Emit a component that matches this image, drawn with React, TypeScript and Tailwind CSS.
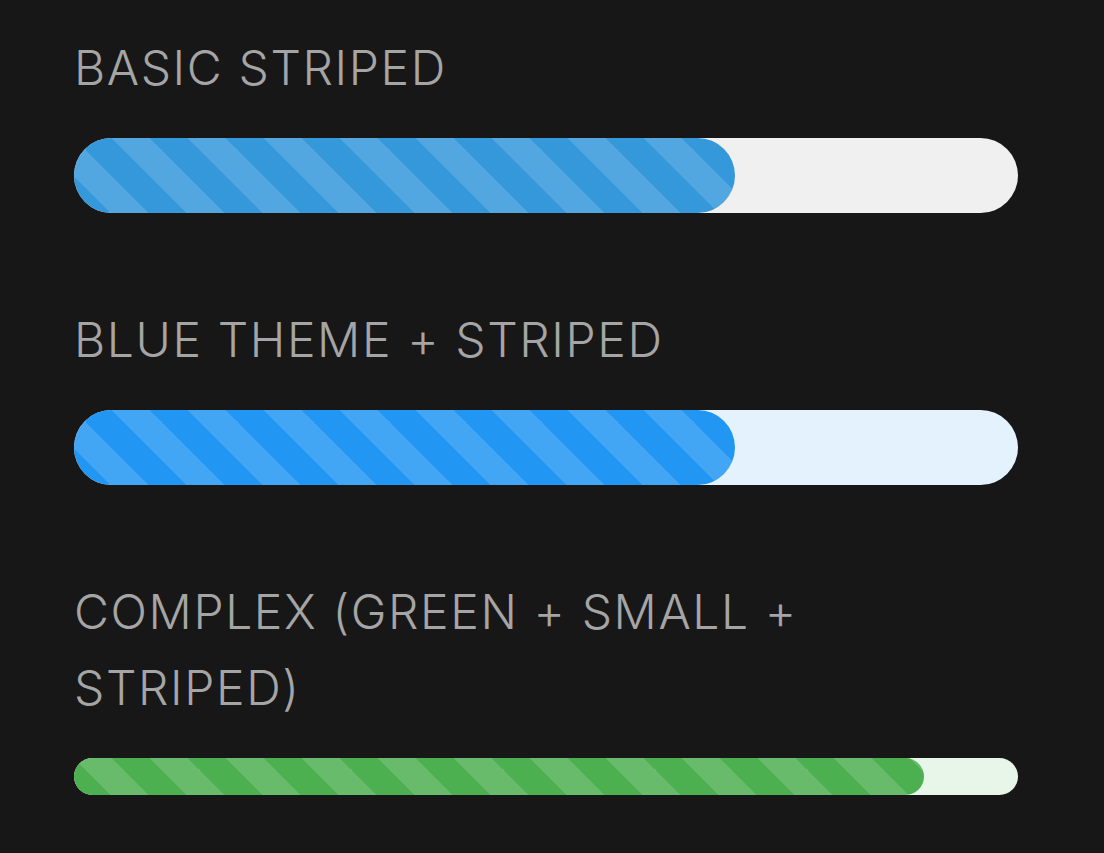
import React from "react";

const labelCls =
  "text-[48px] leading-[1.6] font-light tracking-[1.6px] uppercase text-[#a5a5a5] mb-[31px] font-['Inter','Roboto',sans-serif]";

export default function App() {
  return (
    <div className="min-h-screen bg-[#171717] pl-[74px] pt-[30px]">
      <div className="w-[944px] flex flex-col gap-[89px]">
        <section>
          <div className={labelCls}>Basic Striped</div>
          <div className="h-[75px] rounded-full bg-[#f0f0f0]">
            <div className="h-full w-[70%] rounded-full bg-[#3498db] bg-[linear-gradient(45deg,rgba(255,255,255,0.15)_25%,transparent_25%,transparent_50%,rgba(255,255,255,0.15)_50%,rgba(255,255,255,0.15)_75%,transparent_75%,transparent)] bg-[length:76px_76px] bg-[position:38px_0px]" />
          </div>
        </section>
        <section>
          <div className={labelCls}>Blue Theme + Striped</div>
          <div className="h-[75px] rounded-full bg-[#e3f2fd]">
            <div className="h-full w-[70%] rounded-full bg-[#2196f3] bg-[linear-gradient(45deg,rgba(255,255,255,0.15)_25%,transparent_25%,transparent_50%,rgba(255,255,255,0.15)_50%,rgba(255,255,255,0.15)_75%,transparent_75%,transparent)] bg-[length:76px_76px] bg-[position:38px_0px]" />
          </div>
        </section>
        <section>
          <div className={labelCls}>Complex (Green + Small + Striped)</div>
          <div className="h-[37px] mt-[1px] rounded-full bg-[#e8f5e9]">
            <div className="h-full w-[90%] rounded-full bg-[#4caf50] bg-[linear-gradient(45deg,rgba(255,255,255,0.15)_25%,transparent_25%,transparent_50%,rgba(255,255,255,0.15)_50%,rgba(255,255,255,0.15)_75%,transparent_75%,transparent)] bg-[length:76px_76px] bg-[position:0px_0px]" />
          </div>
        </section>
      </div>
    </div>
  );
}
